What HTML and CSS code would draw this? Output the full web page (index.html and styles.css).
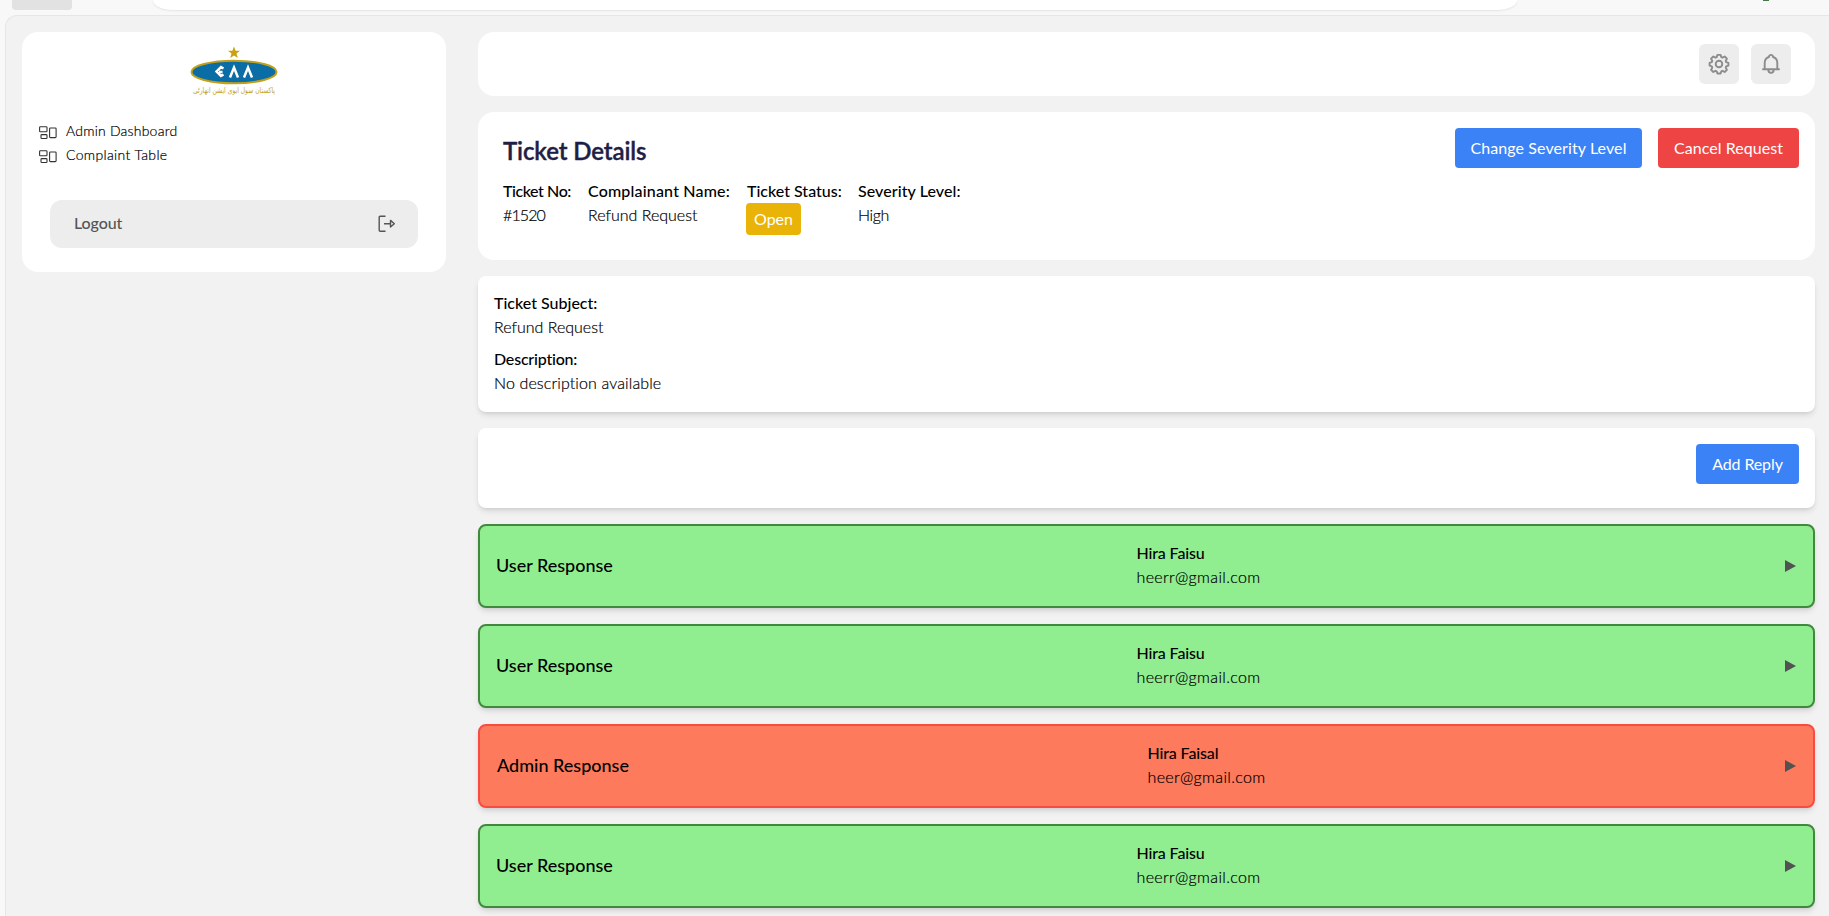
FILE: index.html
```html
<!DOCTYPE html>
<html lang="en">
<head>
<meta charset="utf-8">
<title>Ticket Details</title>
<link rel="stylesheet" href="styles.css">
</head>
<body>
<div class="chrome">
  <div class="chrome-tab"></div>
  <div class="chrome-address"></div>
  <div class="chrome-dot"></div>
</div>
<div class="app">
  <aside class="sidebar">
    <svg class="logo" width="90" height="54" viewBox="0 0 90 54">
      <path d="M45 .5l1.600 4.300h4.400l-3.500 2.800 1.300 4.400-3.800-2.600-3.800 2.600 1.300-4.400-3.500-2.800h4.400z" fill="#c9a20f"/>
      <ellipse cx="45" cy="26" rx="42.500" ry="11.300" fill="#0a6da6" stroke="#c2a01a" stroke-width="2"/>
      <path d="M34.500 22.500l-2.500-1.500-4.500 4.500 4.500 4.500 2.500-1.500M30 26h3.500M41 31.500l4-10 4 10M55 31.500l4-10 4 10" fill="none" stroke="#fff" stroke-width="2.500"/>
      <text x="45" y="47" text-anchor="middle" textLength="82" lengthAdjust="spacingAndGlyphs" class="logo-text">پاکستان سول ایوی ایشن اتھارٹی</text>
    </svg>
    <nav class="menu">
      <a class="menu-item"><svg class="menu-icon" width="18" height="14" viewBox="0 0 18 14"><rect x=".6" y=".8" width="7.400" height="5" rx=".8"/><rect x="2" y="8.600" width="6" height="3.900" rx=".8"/><rect x="10.600" y="2" width="6.500" height="9.600" rx=".8"/></svg><span class="t-admin">Admin Dashboard</span></a>
      <a class="menu-item"><svg class="menu-icon" width="18" height="14" viewBox="0 0 18 14"><rect x=".6" y=".8" width="7.400" height="5" rx=".8"/><rect x="2" y="8.600" width="6" height="3.900" rx=".8"/><rect x="10.600" y="2" width="6.500" height="9.600" rx=".8"/></svg><span class="t-complaint">Complaint Table</span></a>
    </nav>
    <div class="logout"><span>Logout</span>
      <svg width="18" height="18" viewBox="0 0 18 18" fill="none" stroke="#555" stroke-width="1.400" stroke-linejoin="round"><path d="M7.500 1.200H2.200Q1.200 1.200 1.200 2.200v13q0 1 1 1h5.300M6 8.700h7M12.500 5.400v6.600l3.800-3.300z"/></svg>
    </div>
  </aside>
  <main class="main">
    <header class="topbar">
      <button class="icon-btn"><svg width="22" height="22" viewBox="0 0 22 22" fill="none" stroke="#8c8c8c" stroke-width="1.900" stroke-linejoin="round"><circle cx="11" cy="11" r="3.300"/><path d="M9.400 1.900h3.200l.7 2.300 1.200.5 2.200-1.200 2.200 2.200-1.200 2.200.5 1.300 2.200.7v2.700l-2.200.7-.5 1.300 1.200 2.200-2.200 2.200-2.200-1.200-1.200.5-.7 2.200H9.400l-.7-2.200-1.200-.5-2.200 1.200-2.200-2.200 1.200-2.200-.5-1.300-2.200-.7V9.900l2.200-.7.500-1.300-1.200-2.200 2.200-2.200 2.200 1.200 1.200-.5z"/></svg></button>
      <button class="icon-btn"><svg width="22" height="22" viewBox="0 0 22 22" fill="none" stroke="#8c8c8c" stroke-width="1.900" stroke-linejoin="round" stroke-linecap="round"><path d="M3 16.200h16M4.700 16V9.800q0-4.300 4.200-5.800Q9.300 1.900 11 1.900T13.100 4q4.200 1.500 4.200 5.800V16M8.300 16.500q0 3.400 2.700 3.400t2.700-3.400"/></svg></button>
    </header>
    <section class="ticket">
      <div class="ticket-info">
        <h1>Ticket Details</h1>
        <div class="fields">
          <div><b class="t-no">Ticket No:</b><p class="t-id">#1520</p></div>
          <div><b class="t-name">Complainant Name:</b><p>Refund Request</p></div>
          <div><b>Ticket Status:</b><span class="badge">Open</span></div>
          <div><b class="t-level">Severity Level:</b><p class="t-high">High</p></div>
        </div>
      </div>
      <div class="actions">
        <button class="btn btn-severity">Change Severity Level</button>
        <button class="btn btn-cancel">Cancel Request</button>
      </div>
    </section>
    <section class="card details">
      <div><b>Ticket Subject:</b><p>Refund Request</p></div>
      <div><b class="t-desc">Description:</b><p class="t-none">No description available</p></div>
    </section>
    <section class="card reply"><button class="btn btn-reply">Add Reply</button></section>
    <article class="card response user"><h2>User Response</h2><div class="person"><b>Hira Faisu</b><p>heerr@gmail.com</p></div><i class="arrow"></i></article>
    <article class="card response user"><h2>User Response</h2><div class="person"><b>Hira Faisu</b><p>heerr@gmail.com</p></div><i class="arrow"></i></article>
    <article class="card response admin"><h2>Admin Response</h2><div class="person"><b>Hira Faisal</b><p>heer@gmail.com</p></div><i class="arrow"></i></article>
    <article class="card response user"><h2>User Response</h2><div class="person"><b>Hira Faisu</b><p>heerr@gmail.com</p></div><i class="arrow"></i></article>
  </main>
</div>
</body>
</html>
```

FILE: styles.css
```css
* { box-sizing: border-box; margin: 0; padding: 0; }
body {
  height: 916px;
  overflow: hidden;
  background: #f8f8f8;
  color: #000;
  font: 300 16px/24px Lato, "Liberation Sans", sans-serif;
  white-space: nowrap;
}
b { display: block; font-weight: 500; }
p, .menu-item span { -webkit-text-stroke: .2px; }
button { border: 0; font: inherit; color: inherit; }
svg { display: block; flex: none; }

/* Browser strip above the page */
.chrome { display: flex; height: 15px; padding-left: 12px; overflow: hidden; }
.chrome-tab { width: 60px; height: 10px; border-radius: 0 0 4px 4px; background: #e2e2e2; }
.chrome-address {
  width: 1364px; height: 10px; margin-left: 81px;
  border-radius: 0 0 20px 20px / 0 0 10px 10px;
  background: #fff; box-shadow: 0 1px 2px #e4e4e4;
}
.chrome-dot { width: 6px; height: 1px; margin-left: 246px; background: #47764a; }

.app {
  display: flex; align-items: flex-start; gap: 32px;
  height: 901px; margin-left: 5px; padding: 16px 14px 0 16px;
  border: solid #e6e6e6; border-width: 1px 0 0 1px;
  border-top-left-radius: 12px;
  background: #f2f2f2;
}

.sidebar { width: 424px; height: 240px; padding: 14px 16px 0; border-radius: 16px; background: #fff; }
.logo { margin: 0 auto; overflow: visible; }
.logo-text { font: 8px "DejaVu Sans", sans-serif; fill: #c2a01a; }
.menu { padding-top: 19px; }
.menu-item { display: flex; align-items: center; gap: 9px; height: 24px; padding-left: 1px; font-size: 14px; }
.menu-icon { margin-top: 3px; fill: none; stroke: #333; stroke-width: 1.1; }
.t-admin { letter-spacing: .22px; }
.t-complaint { letter-spacing: .35px; }
.logout {
  display: flex; align-items: center; justify-content: space-between;
  height: 48px; margin: 33px 12px 0; padding: 0 22px 0 24px;
  border-radius: 12px; background: #ededed; color: #555;
  font-weight: 500; letter-spacing: -.1px;
}
.logout span { margin-top: -2px; }

.main { width: 1337px; display: flex; flex-direction: column; gap: 16px; }
.topbar {
  display: flex; justify-content: flex-end; align-items: center; gap: 12px;
  height: 64px; padding-right: 24px; border-radius: 16px; background: #fff;
}
.icon-btn { display: grid; place-items: center; width: 40px; height: 40px; border-radius: 6px; background: #ededed; }

.ticket {
  display: flex; justify-content: space-between;
  height: 148px; padding: 16px 16px 0 25px;
  border-radius: 16px; background: #fff;
}
h1 {
  padding-top: 7px; color: #1f1f45;
  font-size: 24px; font-weight: 600; line-height: 32px; letter-spacing: -.1px;
  -webkit-text-stroke: .4px;
}
.fields { display: grid; grid-template-columns: 69px 143px 95px auto; gap: 16px; padding-top: 12px; }
.t-no { letter-spacing: -.42px; }
.t-id { letter-spacing: -.88px; }
.t-name { letter-spacing: .18px; }
.t-level { letter-spacing: .08px; }
.t-high { letter-spacing: -.37px; }
.t-desc { letter-spacing: -.2px; }
.t-none { letter-spacing: .12px; }
.badge {
  display: block; width: 55px; margin-left: -1px; padding: 4px 8px;
  border-radius: 4px; background: #eab308; color: #fff; font-weight: 400;
}
.actions { display: flex; align-items: flex-start; gap: 16px; }
.btn { height: 40px; padding-bottom: 1px; border-radius: 4px; background: #3b82f6; color: #fff; font-weight: 400; text-align: center; }
.btn-severity { width: 187px; letter-spacing: .09px; }
.btn-cancel { width: 141px; background: #ef4444; letter-spacing: .05px; }
.btn-reply { width: 103px; letter-spacing: -.12px; }

.card { border-radius: 8px; background: #fff; box-shadow: 0 4px 6px -1px rgba(0,0,0,.11), 0 2px 4px -2px rgba(0,0,0,.11); }
.details { display: flex; flex-direction: column; gap: 8px; height: 136px; padding: 15px 16px; }
.reply { display: flex; justify-content: flex-end; height: 80px; padding: 16px; }
.response { display: flex; align-items: center; justify-content: space-between; height: 84px; padding: 0 17px 0 16px; border: 2px solid; }
.user { background: #90ee90; border-color: #42883f; }
.admin { background: #fd7a5c; border-color: #f84c42; }
h2 { width: 117px; margin-top: -2px; font-size: 18px; font-weight: 500; line-height: 28px; }
.admin h2 { width: 133px; text-indent: 1px; }
.person { width: 125px; margin-top: -2px; letter-spacing: .34px; }
.person b { letter-spacing: -.14px; }
.admin .person { width: 119px; }
.arrow { border: solid transparent; border-width: 6.5px 0 6.5px 11px; border-left-color: #525252; }
```
